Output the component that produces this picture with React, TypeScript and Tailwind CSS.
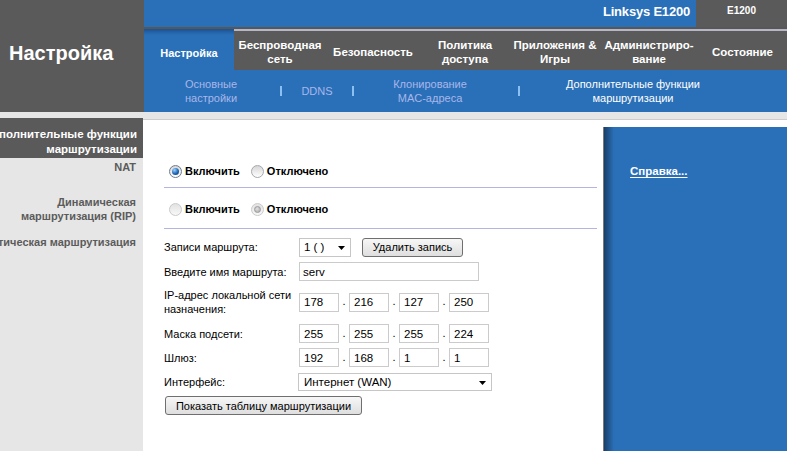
import React from "react";

function Radio({ checked, disabled }: { checked?: boolean; disabled?: boolean }) {
  if (disabled) {
    return (
      <span className="flex h-[13px] w-[13px] items-center justify-center rounded-full border border-[#cacaca] bg-[linear-gradient(#e2e2e2,#f8f8f8)]">
        {checked && <span className="h-[7px] w-[7px] rounded-full border border-[#9a9a9a] bg-[radial-gradient(circle_at_40%_35%,#e0e0e0,#a8a8a8)]" />}
      </span>
    );
  }
  return (
    <span className={`flex h-[13px] w-[13px] items-center justify-center rounded-full border ${checked ? "border-[#6f7c8c]" : "border-[#a4a8ae]"} bg-[linear-gradient(#d6d6d6,#ffffff)]`}>
      {checked && <span className="h-[7px] w-[7px] rounded-full bg-[radial-gradient(circle_at_35%_30%,#9fd2ff,#1e64b4_55%,#0b3c7a)]" />}
    </span>
  );
}

function Arrow() {
  return (
    <svg width="7" height="4" viewBox="0 0 7 4" className="absolute right-[5px] top-1/2 -translate-y-[1px]">
      <polygon points="0,0 7,0 3.5,4" fill="#000" />
    </svg>
  );
}

function IpInputs({ v }: { v: string[] }) {
  return (
    <div className="flex items-center">
      {v.map((x, i) => (
        <React.Fragment key={i}>
          {i > 0 && <span className="flex h-full w-[10px] items-end justify-center pb-[1px] leading-none">.</span>}
          <div className="flex h-[19px] w-[40px] items-center border border-[#cbcbcb] bg-white pl-[4px] text-[11.5px]">{x}</div>
        </React.Fragment>
      ))}
    </div>
  );
}

export default function App() {
  const tabs = [
    { w: "w-[92px]", t: ["Беспроводная", "сеть"] },
    { w: "w-[94px]", t: ["Безопасность"] },
    { w: "w-[90px]", t: ["Политика", "доступа"] },
    { w: "w-[90px]", t: ["Приложения &", "Игры"] },
    { w: "w-[98px]", t: ["Администриро-", "вание"] },
    { w: "w-[89px]", t: ["Состояние"] },
  ];
  return (
    <div className="h-[451px] w-[795px] overflow-hidden bg-white font-['Liberation_Sans',Arial,sans-serif] text-black">
      <div className="w-[787px]">
        {/* header */}
        <div className="flex h-[112px]">
          <div className="w-[144px] bg-[#5a5a5a] pl-[9px] pt-[41px] text-[20px] font-bold leading-[24px] text-white">Настройка</div>
          <div className="flex flex-1 flex-col">
            <div className="flex h-[27px]">
              <div className="flex flex-1 justify-end bg-[#2a70b8] pr-[6px] pt-[4px] text-[13px] font-bold leading-[15px] tracking-[-0.2px] text-white">Linksys E1200</div>
              <div className="flex w-[91px] justify-center bg-[#5a5a5a] pt-[5px] text-[10px] font-bold leading-[12px] text-white">E1200</div>
            </div>
            <div className="h-[2px] bg-[#575757]" />
            <div className="flex h-[41px]">
              <div className="flex w-[90px] items-center justify-center bg-[linear-gradient(#1c5291,#2a70b8_6px)] pt-[7px] text-[11px] font-bold leading-[14px] text-white">Настройка</div>
              <div className="flex flex-1 border-t-2 border-[#b6b6c6] bg-[#5a5a5a]">
                {tabs.map((tb, i) => (
                  <div key={i} className={`${tb.w} flex flex-col items-center justify-center whitespace-nowrap pt-[2px] text-center text-[11.5px] font-bold leading-[14px] text-white`}>
                    {tb.t.map((l, j) => (
                      <div key={j}>{l}</div>
                    ))}
                  </div>
                ))}
              </div>
            </div>
            <div className="flex h-[42px] items-center bg-[#2a70b8] text-[11px] leading-[14px] text-[#a9b6ea]">
              <div className="w-[134px] text-center">
                <div>Основные</div>
                <div>настройки</div>
              </div>
              <div className="flex w-[6px] justify-center"><div className="h-[10px] w-[2px] bg-[#8cc0f0]" /></div>
              <div className="w-[66px] text-center">DDNS</div>
              <div className="flex w-[6px] justify-center"><div className="h-[10px] w-[2px] bg-[#8cc0f0]" /></div>
              <div className="w-[148px] text-center">
                <div>Клонирование</div>
                <div>MAC-адреса</div>
              </div>
              <div className="ml-[12px] flex w-[6px] justify-center"><div className="h-[10px] w-[2px] bg-[#8cc0f0]" /></div>
              <div className="w-[222px] text-center text-white">
                <div>Дополнительные функции</div>
                <div>маршрутизации</div>
              </div>
            </div>
          </div>
        </div>

        {/* body */}
        <div className="flex h-[339px] bg-[#e6e6e6]">
          <div className="flex w-[143px] flex-col items-end pr-[7px] pt-[6px] text-[11px] font-bold text-[#5b5b5b]">
            <div className="-mr-[7px] flex h-[40px] w-[143px] flex-col items-end bg-[#5a5a5a] pr-[6px] pt-[9px] text-[11.5px] leading-[15px] text-white">
              <div className="whitespace-nowrap">Дополнительные функции</div>
              <div className="whitespace-nowrap">маршрутизации</div>
            </div>
            <div className="mt-[2px] leading-[15px]">NAT</div>
            <div className="mt-[20px] flex flex-col items-end leading-[14px]">
              <div className="whitespace-nowrap">Динамическая</div>
              <div className="whitespace-nowrap">маршрутизация (RIP)</div>
            </div>
            <div className="mt-[12px] whitespace-nowrap leading-[14px]">Статическая маршрутизация</div>
          </div>
          <div className="flex flex-1 flex-col pt-[7px]">
            <div className="flex flex-1 border-t border-[#cdcdcd] bg-white">
              {/* main */}
              <div className="w-[460px] pl-[21px] pr-[6px] pt-[41px] text-[11px] leading-[14px]">
                <div className="flex h-[20px] items-center font-bold">
                  <span className="ml-[5px]"><Radio checked /></span>
                  <span className="ml-[3px]">Включить</span>
                  <span className="ml-[11px]"><Radio /></span>
                  <span className="ml-[3px]">Отключено</span>
                </div>
                <div className="mt-[6px] h-px bg-[#b4b4e0]" />
                <div className="mt-[11px] flex h-[20px] items-center font-bold">
                  <span className="ml-[5px]"><Radio disabled /></span>
                  <span className="ml-[3px]">Включить</span>
                  <span className="ml-[11px]"><Radio disabled checked /></span>
                  <span className="ml-[3px]">Отключено</span>
                </div>
                <div className="mt-[9px] h-px bg-[#b4b4e0]" />

                <div className="mt-[8px] flex h-[20px] items-center">
                  <div className="w-[135px]">Записи маршрута:</div>
                  <div className="relative flex h-[19px] w-[52px] items-center border border-[#c6c6c6] bg-white pl-[4px] text-[11.5px]">
                    1 ( )
                    <Arrow />
                  </div>
                  <button className="ml-[11px] h-[19px] w-[101px] rounded-[3px] border border-[#6f6f6f] bg-[linear-gradient(#f7f7f7,#dedede)] text-[11px] leading-[14px]">Удалить запись</button>
                </div>
                <div className="mt-[5px] flex h-[19px] items-center">
                  <div className="w-[135px]">Введите имя маршрута:</div>
                  <div className="flex h-[19px] w-[180px] items-center border border-[#cbcbcb] bg-white pl-[3px] text-[11.5px]">serv</div>
                </div>
                <div className="mt-[7px] flex h-[28px] items-center">
                  <div className="w-[135px]">
                    <div>IP-адрес локальной сети</div>
                    <div>назначения:</div>
                  </div>
                  <IpInputs v={["178", "216", "127", "250"]} />
                </div>
                <div className="mt-[8px] flex h-[19px] items-center">
                  <div className="w-[135px]">Маска подсети:</div>
                  <IpInputs v={["255", "255", "255", "224"]} />
                </div>
                <div className="mt-[5px] flex h-[19px] items-center">
                  <div className="w-[135px]">Шлюз:</div>
                  <IpInputs v={["192", "168", "1", "1"]} />
                </div>
                <div className="mt-[6px] flex h-[18px] items-center">
                  <div className="w-[134px]">Интерфейс:</div>
                  <div className="relative flex h-[18px] w-[194px] items-center border border-[#c6c6c6] bg-white pl-[5px] text-[11.5px]">
                    Интернет (WAN)
                    <Arrow />
                  </div>
                </div>
                <div className="mt-[5px] flex h-[19px]">
                  <button className="ml-[1px] h-[19px] w-[197px] rounded-[3px] border border-[#6f6f6f] bg-[linear-gradient(#f7f7f7,#dedede)] text-[11px] leading-[14px]">Показать таблицу маршрутизации</button>
                </div>
              </div>
              {/* right */}
              <div className="mt-[7px] flex-1 border-l border-[#7a7a7a] bg-[linear-gradient(to_right,#1b3d68,#2a70b8_10px)] pl-[26px] pt-[31px]">
                <span className="text-[11.5px] font-bold leading-[14px] text-white underline underline-offset-[2px]">Справка...</span>
              </div>
            </div>
          </div>
        </div>
      </div>
    </div>
  );
}
